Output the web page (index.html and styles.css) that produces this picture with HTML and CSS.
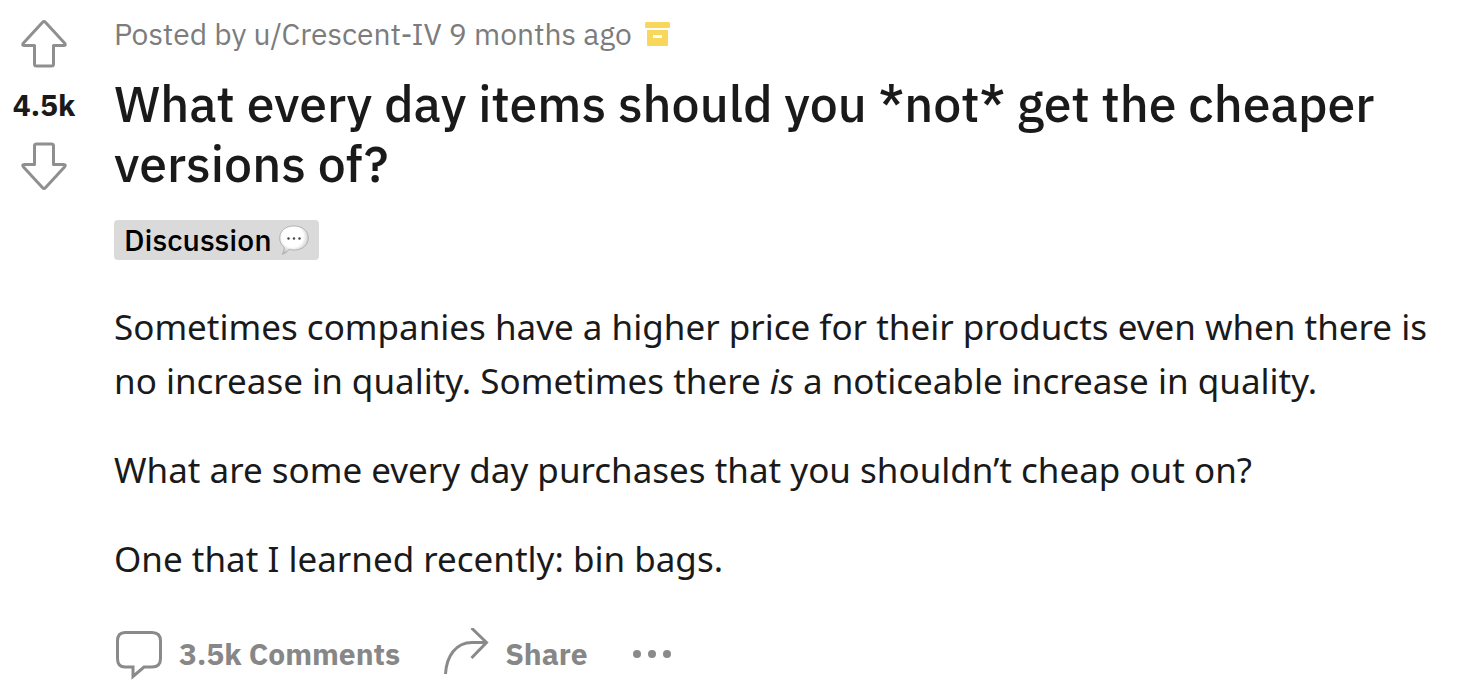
FILE: index.html
```html
<!DOCTYPE html>
<html lang="en">
<head>
    <meta charset="UTF-8">
    <meta name="viewport" content="width=device-width, initial-scale=1.0">
    <title>What every day items should you *not* get the cheaper versions of?</title>
    <link rel="stylesheet" href="styles.css">
</head>
<body>
    <article class="post">
        <div class="votes">
            <button class="vote-btn" type="button" aria-label="Upvote">
                <svg width="48" height="50" viewBox="0 0 48 50"><path d="M22.600 3.200Q24 1.600 25.400 3.200L44.500 24Q46.500 26.500 43.500 26.500H33.500V45Q33.500 47 31.500 47H16.500Q14.500 47 14.500 45V26.500H4.500Q1.500 26.500 3.500 24Z"/></svg>
            </button>
            <span class="vote-count">4.5k</span>
            <button class="vote-btn" type="button" aria-label="Downvote">
                <svg width="48" height="50" viewBox="0 0 48 50"><path d="M22.600 46.800Q24 48.400 25.400 46.800L44.500 26Q46.500 23.500 43.500 23.500H33.500V5Q33.500 3 31.500 3H16.500Q14.500 3 14.500 5V23.500H4.500Q1.500 23.500 3.500 26Z"/></svg>
            </button>
        </div>

        <div class="post-content">
            <div class="post-meta">
                <span>Posted by u/Crescent-IV 9 months ago</span>
                <svg class="archive-icon" width="26" height="26" viewBox="0 0 26 26">
                    <rect x="0" y="1" width="25" height="6" rx="1.500"/>
                    <path fill-rule="evenodd" d="M2 9H23V24Q23 25 22 25H3Q2 25 2 24ZM8 14V17H17V14Z"/>
                </svg>
            </div>

            <h1 class="post-title">What every day items should you *not* get the cheaper versions of?</h1>

            <div class="flair">
                <span>Discussion</span>
                <svg width="30" height="30" viewBox="0 0 30 30">
                    <defs>
                        <radialGradient id="bubble" cx="45%" cy="38%" r="62%">
                            <stop offset="60%" stop-color="#ffffff"/>
                            <stop offset="100%" stop-color="#bdbdbd"/>
                        </radialGradient>
                    </defs>
                    <path d="M15 1C23.500 1 29.300 6 29.300 13S23.500 25 15 25C13 25 11.500 24.800 10 24.300C8.500 27 6 28.700 3 29.200C4.700 27.500 5.400 25 5 22C2.200 20 .7 17 .7 13C.7 6 6.500 1 15 1Z" fill="url(#bubble)" stroke="#a8a8a8" stroke-width=".8"/>
                    <g fill="#444"><circle cx="9.500" cy="13.500" r="1.200"/><circle cx="15" cy="13.500" r="1.200"/><circle cx="20.500" cy="13.500" r="1.200"/></g>
                </svg>
            </div>

            <div class="post-body">
                <p>Sometimes companies have a higher price for their products even when there is no increase in quality. Sometimes there <em>is</em> a noticeable increase in quality.</p>
                <p>What are some every day purchases that you shouldn’t cheap out on?</p>
                <p>One that I learned recently: bin bags.</p>
            </div>

            <div class="post-actions">
                <button class="action-btn" type="button">
                    <svg width="50" height="52" viewBox="0 0 50 52"><path d="M11 4.500H38Q46.500 4.500 46.500 13V30.500Q46.500 39 38 39H30L19 48.500V39H11Q3.500 39 3.500 30.500V13Q3.500 4.500 11 4.500Z"/></svg>
                    <span>3.5k Comments</span>
                </button>
                <button class="action-btn" type="button">
                    <svg width="46" height="52" viewBox="0 0 46 52"><path d="M1.500 46C2.500 28 12 14.500 28 14.500H42.500M27.500 0L42.500 14.500L27.500 30"/></svg>
                    <span>Share</span>
                </button>
                <button class="action-btn" type="button" aria-label="More options">
                    <svg class="dots" width="40" height="10" viewBox="0 0 40 10"><circle cx="5" cy="5" r="4"/><circle cx="20" cy="5" r="4"/><circle cx="35" cy="5" r="4"/></svg>
                </button>
            </div>
        </div>
    </article>
</body>
</html>
```
FILE: styles.css
```css
/* Global styles */
body {
    margin: 0;
    background-color: #fff;
    color: #1a1a1b;
    font-family: 'IBM Plex Sans', Roboto, sans-serif;
}

button {
    padding: 0;
    border: none;
    background: none;
    font-family: inherit;
    cursor: pointer;
}

svg {
    display: block;
    flex-shrink: 0;
}

.post {
    display: flex;
}

/* Vote column */
.votes {
    width: 88px;
    flex-shrink: 0;
    display: flex;
    flex-direction: column;
    align-items: center;
    padding-top: 19px;
}

.vote-btn svg {
    fill: none;
    stroke: #8f8f8f;
    stroke-width: 3;
    stroke-linejoin: round;
}

.vote-count {
    margin: 18px 0;
    font-size: 30px;
    font-weight: 700;
    line-height: 36px;
}

/* Post content */
.post-content {
    flex: 1;
    min-width: 0;
    padding: 14px 40px 0 26px;
}

.post-meta {
    display: flex;
    align-items: center;
    gap: 13px;
    font-size: 30px;
    line-height: 40px;
    color: #7c7c7c;
}

.archive-icon {
    fill: #f8d75b;
}

.post-title {
    margin: 20px 0 26px;
    font-size: 50px;
    font-weight: 500;
    line-height: 60px;
}

.flair {
    display: inline-flex;
    align-items: center;
    gap: 7px;
    padding: 0 10px;
    border-radius: 4px;
    background-color: #dadada;
    color: #000;
    font-size: 30px;
    font-weight: 500;
    line-height: 40px;
    vertical-align: top;
}

.post-body {
    margin-top: 40px;
    font-family: 'Noto Sans', sans-serif;
    font-size: 35px;
    line-height: 54px;
}

.post-body p {
    margin: 0 0 35px;
}

/* Action bar */
.post-actions {
    display: flex;
    align-items: center;
    gap: 44px;
    margin-top: 42px;
}

.action-btn {
    display: flex;
    align-items: center;
    gap: 15px;
    color: #878787;
    font-size: 30px;
    font-weight: 700;
    line-height: 52px;
}

.action-btn svg {
    fill: none;
    stroke: #8a8a8a;
    stroke-width: 3;
}

.action-btn .dots {
    fill: #8a8a8a;
    stroke: none;
}
```
